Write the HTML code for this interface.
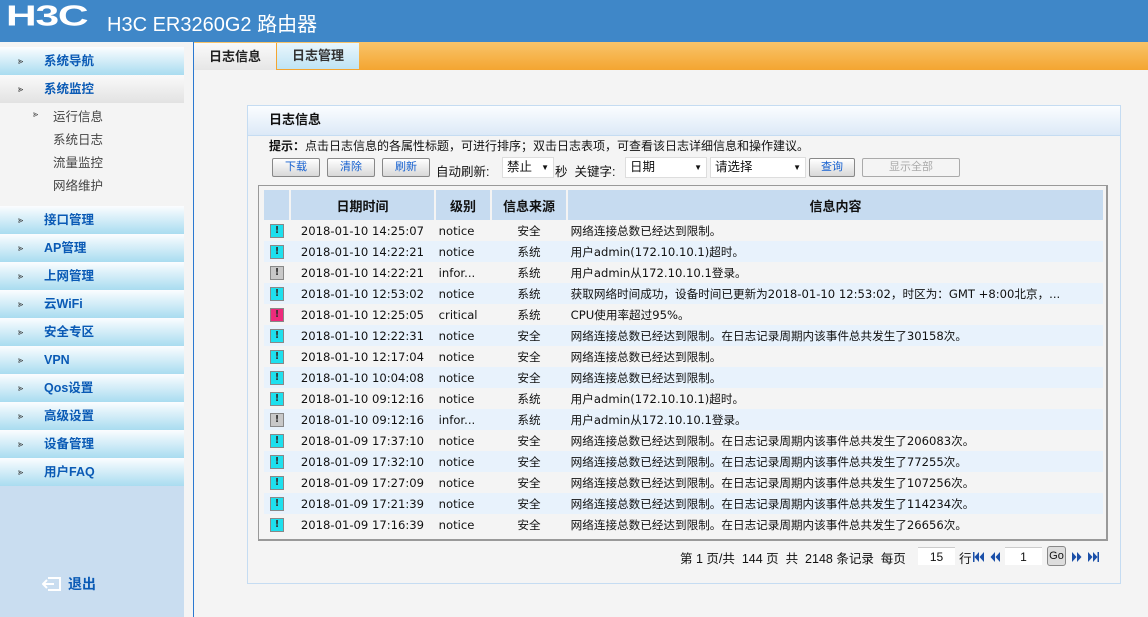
<!DOCTYPE html>
<html><head><meta charset="utf-8"><style>
*{margin:0;padding:0;box-sizing:border-box}
body{width:1148px;height:617px;overflow:hidden;background:#f4f4f4;font-family:"Liberation Sans","Noto Sans CJK SC",sans-serif;font-size:12px;color:#111;position:relative}
.hdr{position:absolute;left:0;top:0;width:1148px;height:42px;background:#3f87c8;color:#fff}
.logo{position:absolute;left:6px;top:0px;font:bold 34px "Liberation Sans",sans-serif;letter-spacing:-1px;transform:scaleX(1.25) scaleY(0.85);transform-origin:left top}
.ttl{position:absolute;left:107px;top:8px;font-size:20px}
.side{position:absolute;left:0;top:42px;width:184px;height:575px;background:#f4f4f4}
.mi{position:absolute;left:0;width:184px;height:28px;background:linear-gradient(#fbfdff,#a9dcf0);color:#0a5ab5;font-weight:bold;font-size:12.5px;line-height:28px;padding-left:44px}
.mi:before{content:"⪢";position:absolute;left:18px;color:#333;font-size:9px;font-weight:normal}
.mi.sel{background:linear-gradient(#fafafa,#e2e2e2)}
.sub{position:absolute;left:53px;font-size:12.5px;color:#444}
.bot{position:absolute;left:0;top:444px;width:184px;height:131px;background:#c9ddf0}
.vl{position:absolute;left:193px;top:42px;width:1px;height:575px;background:#2a78d0}
.tabs{position:absolute;left:194px;top:42px;width:954px;height:28px;background:linear-gradient(#f8c46a,#f4a531)}
.t1{position:absolute;left:0;top:1px;width:82px;height:27px;background:linear-gradient(#fafafa,#e6e6e6);font-weight:bold;font-size:13px;text-align:center;line-height:27px;color:#222}
.t2{position:absolute;left:82px;top:1px;width:83px;height:27px;background:linear-gradient(#eaf6fc,#bfe4f4);border-left:1px solid #f4a531;border-bottom:1px solid #f4a531;font-weight:bold;font-size:13px;text-align:center;line-height:26px;color:#333}
.panel{position:absolute;left:247px;top:105px;width:874px;height:479px;border:1px solid #c5dcf2;background:#f4f4f4}
.ptl{height:30px;background:linear-gradient(#fbfdff,#dce9f7);font-weight:bold;font-size:13px;line-height:28px;padding-left:21px;border-bottom:1px solid #c5dcf2}
.tip{position:absolute;left:21px;top:31px;font-size:12px}
.btn{position:absolute;top:52px;height:19px;border:1px solid #888;border-radius:2px;background:linear-gradient(#fff,#d8d8d8);color:#1560d0;font-size:11px;text-align:center;line-height:17px}
.sel2{position:absolute;top:51px;height:21px;background:#fff;border:1px solid #ddd;font-size:12.5px;line-height:19px;padding-left:4px}
.sel2:after{content:"▼";position:absolute;right:4px;font-size:8px}
.tb{position:absolute;left:10px;top:79px;width:850px;height:356px;border:1px solid #999;border-width:1px 2px 2px 1px;background:#f4f4f4}
table{position:absolute;left:5px;top:4px;border-collapse:collapse;font-size:12.5px;font-family:"DejaVu Sans","Noto Sans CJK SC",sans-serif}
table td{font-size:11.6px}
th{background:#c6dbf0;height:30px;font-size:13px;border-right:2px solid #f4f4f4;font-family:"Liberation Sans","Noto Sans CJK SC",sans-serif}
td{height:21px;padding:0;white-space:nowrap}
tr.a td{background:#f4f4f4}tr.b td{background:#e8f2fc}
.ic{display:inline-block;width:14px;height:14px;border:1px solid #888;background:#1ee0ee;font-weight:bold;font-size:10px;line-height:12px;text-align:center;color:#333;vertical-align:middle}
.g{background:#c8c8c8}.r{background:#ee2a7b}
.pg{position:absolute;left:680px;top:548px;font-size:12.5px}
.inp{position:absolute;background:#fff;height:18px;font-size:12px;text-align:center;line-height:18px;border-top:1px solid #ccc}
svg{position:absolute}
</style></head><body>
<div class="hdr"><div class="logo">H3C</div><div class="ttl">H3C ER3260G2 路由器</div></div>
<div class="side">
<div class="mi" style="top:5px">系统导航</div>
<div class="mi sel" style="top:33px">系统监控</div>
<div class="sub" style="top:67px;left:33px;font-size:9px">⪢</div>
<div class="sub" style="top:64px">运行信息</div>
<div class="sub" style="top:87px">系统日志</div>
<div class="sub" style="top:110px">流量监控</div>
<div class="sub" style="top:133px">网络维护</div>
<div class="mi" style="top:164px">接口管理</div>
<div class="mi" style="top:192px">AP管理</div>
<div class="mi" style="top:220px">上网管理</div>
<div class="mi" style="top:248px">云WiFi</div>
<div class="mi" style="top:276px">安全专区</div>
<div class="mi" style="top:304px">VPN</div>
<div class="mi" style="top:332px">Qos设置</div>
<div class="mi" style="top:360px">高级设置</div>
<div class="mi" style="top:388px">设备管理</div>
<div class="mi" style="top:416px">用户FAQ</div>
<div class="bot"><svg style="left:42px;top:90px" width="20" height="16" viewBox="0 0 20 16"><path d="M6 2H18V14H6M1 8H12M5 4L1 8L5 12" fill="none" stroke="#fff" stroke-width="2"/></svg><div style="position:absolute;left:68px;top:88px;color:#0a5ab5;font-weight:bold;font-size:14px">退出</div></div>
</div>
<div class="vl"></div>
<div class="tabs"><div class="t1">日志信息</div><div class="t2">日志管理</div></div>
<div class="panel">
<div class="ptl">日志信息</div>
<div class="tip"><b>提示：</b>点击日志信息的各属性标题，可进行排序；双击日志表项，可查看该日志详细信息和操作建议。</div>
<div class="btn" style="left:24px;width:48px">下载</div>
<div class="btn" style="left:79px;width:48px">清除</div>
<div class="btn" style="left:134px;width:48px">刷新</div>
<div style="position:absolute;left:188px;top:55px;font-size:12.5px">自动刷新:</div>
<div class="sel2" style="left:254px;width:52px">禁止</div>
<div style="position:absolute;left:307px;top:55px;font-size:12.5px">秒 &nbsp;关键字:</div>
<div class="sel2" style="left:377px;width:82px">日期</div>
<div class="sel2" style="left:462px;width:96px">请选择</div>
<div class="btn" style="left:561px;width:46px">查询</div>
<div class="btn" style="left:614px;width:98px;color:#aaa;background:#f4f4f4;border-color:#aaa">显示全部</div>
<div class="tb"><table>
<tr><th style="width:26px"></th><th style="width:145px">日期时间</th><th style="width:56px">级别</th><th style="width:76px">信息来源</th><th style="width:536px;border-right:0">信息内容</th></tr>
<tr class="a"><td align="center"><span class="ic">!</span></td><td align="center">2018-01-10 14:25:07</td><td>&nbsp;notice</td><td align="center">安全</td><td>&nbsp;网络连接总数已经达到限制。</td></tr>
<tr class="b"><td align="center"><span class="ic">!</span></td><td align="center">2018-01-10 14:22:21</td><td>&nbsp;notice</td><td align="center">系统</td><td>&nbsp;用户admin(172.10.10.1)超时。</td></tr>
<tr class="a"><td align="center"><span class="ic g">!</span></td><td align="center">2018-01-10 14:22:21</td><td>&nbsp;infor...</td><td align="center">系统</td><td>&nbsp;用户admin从172.10.10.1登录。</td></tr>
<tr class="b"><td align="center"><span class="ic">!</span></td><td align="center">2018-01-10 12:53:02</td><td>&nbsp;notice</td><td align="center">系统</td><td>&nbsp;获取网络时间成功，设备时间已更新为2018-01-10 12:53:02，时区为：GMT +8:00北京，...</td></tr>
<tr class="a"><td align="center"><span class="ic r">!</span></td><td align="center">2018-01-10 12:25:05</td><td>&nbsp;critical</td><td align="center">系统</td><td>&nbsp;CPU使用率超过95%。</td></tr>
<tr class="b"><td align="center"><span class="ic">!</span></td><td align="center">2018-01-10 12:22:31</td><td>&nbsp;notice</td><td align="center">安全</td><td>&nbsp;网络连接总数已经达到限制。在日志记录周期内该事件总共发生了30158次。</td></tr>
<tr class="a"><td align="center"><span class="ic">!</span></td><td align="center">2018-01-10 12:17:04</td><td>&nbsp;notice</td><td align="center">安全</td><td>&nbsp;网络连接总数已经达到限制。</td></tr>
<tr class="b"><td align="center"><span class="ic">!</span></td><td align="center">2018-01-10 10:04:08</td><td>&nbsp;notice</td><td align="center">安全</td><td>&nbsp;网络连接总数已经达到限制。</td></tr>
<tr class="a"><td align="center"><span class="ic">!</span></td><td align="center">2018-01-10 09:12:16</td><td>&nbsp;notice</td><td align="center">系统</td><td>&nbsp;用户admin(172.10.10.1)超时。</td></tr>
<tr class="b"><td align="center"><span class="ic g">!</span></td><td align="center">2018-01-10 09:12:16</td><td>&nbsp;infor...</td><td align="center">系统</td><td>&nbsp;用户admin从172.10.10.1登录。</td></tr>
<tr class="a"><td align="center"><span class="ic">!</span></td><td align="center">2018-01-09 17:37:10</td><td>&nbsp;notice</td><td align="center">安全</td><td>&nbsp;网络连接总数已经达到限制。在日志记录周期内该事件总共发生了206083次。</td></tr>
<tr class="b"><td align="center"><span class="ic">!</span></td><td align="center">2018-01-09 17:32:10</td><td>&nbsp;notice</td><td align="center">安全</td><td>&nbsp;网络连接总数已经达到限制。在日志记录周期内该事件总共发生了77255次。</td></tr>
<tr class="a"><td align="center"><span class="ic">!</span></td><td align="center">2018-01-09 17:27:09</td><td>&nbsp;notice</td><td align="center">安全</td><td>&nbsp;网络连接总数已经达到限制。在日志记录周期内该事件总共发生了107256次。</td></tr>
<tr class="b"><td align="center"><span class="ic">!</span></td><td align="center">2018-01-09 17:21:39</td><td>&nbsp;notice</td><td align="center">安全</td><td>&nbsp;网络连接总数已经达到限制。在日志记录周期内该事件总共发生了114234次。</td></tr>
<tr class="a"><td align="center"><span class="ic">!</span></td><td align="center">2018-01-09 17:16:39</td><td>&nbsp;notice</td><td align="center">安全</td><td>&nbsp;网络连接总数已经达到限制。在日志记录周期内该事件总共发生了26656次。</td></tr>
</table></div>
</div>
<div class="pg">第 1 页/共 &nbsp;144 页 &nbsp;共 &nbsp;2148 条记录 &nbsp;每页</div>
<div class="inp" style="left:918px;top:547px;width:37px">15</div>
<div style="position:absolute;left:959px;top:548px;font-size:12.5px">行</div>
<svg style="left:973px;top:552px" width="30" height="10" viewBox="0 0 30 10"><g fill="#1a4fa8"><rect x="0" y="0" width="1.5" height="10"/><path d="M6 0L1.5 5L6 10ZM11 0L6.5 5L11 10Z"/><path d="M22 0L17.5 5L22 10ZM27 0L22.5 5L27 10Z"/></g></svg>
<div class="inp" style="left:1005px;top:547px;width:37px">1</div>
<div style="position:absolute;left:1047px;top:546px;width:19px;height:20px;border:1px solid #888;border-radius:3px;background:#ddd;font-size:11px;text-align:center;line-height:18px">Go</div>
<svg style="left:1072px;top:552px" width="30" height="10" viewBox="0 0 30 10"><g fill="#1a4fa8"><path d="M0 0L4.5 5L0 10ZM5 0L9.5 5L5 10Z"/><path d="M16 0L20.5 5L16 10ZM21 0L25.5 5L21 10Z"/><rect x="25.5" y="0" width="1.5" height="10"/></g></svg>
</body></html>
